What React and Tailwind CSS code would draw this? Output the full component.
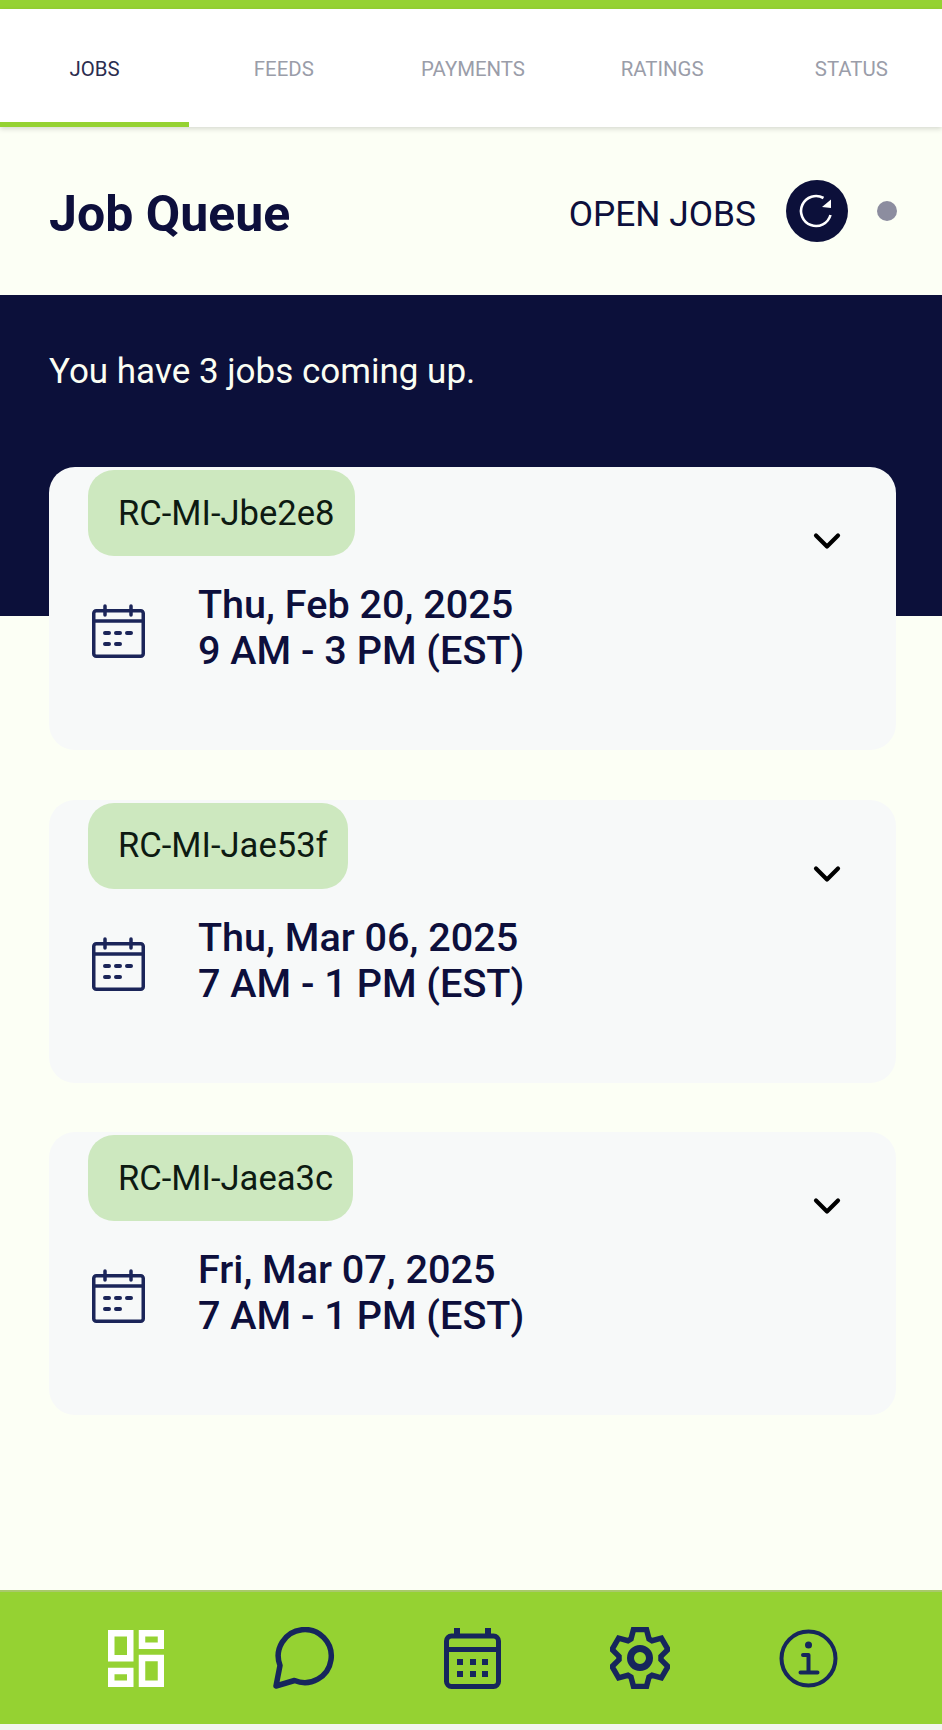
import { ChevronDown } from 'lucide-react';

const tabs = ['JOBS', 'FEEDS', 'PAYMENTS', 'RATINGS', 'STATUS'];

const jobs = [
  { id: 'RC-MI-Jbe2e8', date: 'Thu, Feb 20, 2025', time: '9 AM - 3 PM (EST)' },
  { id: 'RC-MI-Jae53f', date: 'Thu, Mar 06, 2025', time: '7 AM - 1 PM (EST)' },
  { id: 'RC-MI-Jaea3c', date: 'Fri, Mar 07, 2025', time: '7 AM - 1 PM (EST)' },
];

// six teeth around the centre of the gear icon
const gearPoints = [0, 60, 120, 180, 240, 300]
  .flatMap((deg) => {
    const a = (deg * Math.PI) / 180;
    return [[-9, -19], [-6.500, -28.500], [6.500, -28.500], [9, -19]].map(([x, y]) => [
      (30 + x * Math.cos(a) - y * Math.sin(a)).toFixed(1),
      (31 + x * Math.sin(a) + y * Math.cos(a)).toFixed(1),
    ]);
  })
  .map((p) => p.join(','))
  .join(' ');

function RefreshIcon() {
  return (
    <svg width="62" height="62" viewBox="0 0 62 62" fill="none">
      <path d="M37.500 18A15 15 0 1 0 44.500 35" stroke="#ffffff" strokeWidth="2.600" />
      <path d="M36 27L45 28V19.500Z" fill="#ffffff" />
    </svg>
  );
}

function CalendarSmall() {
  return (
    <svg width="53" height="54" viewBox="0 0 53 54" fill="none" stroke="#1b2559" strokeWidth="3.500" strokeLinejoin="round">
      <rect x="1.750" y="6.750" width="49.500" height="45.500" rx="2.500" />
      <path d="M1.750 17h49.500" />
      <path d="M13 2v9M39 2v9" strokeWidth="3.500" strokeLinecap="round" />
      <path d="M13 29h4M24 29h4M35 29h4M13 40h4M24 40h4" strokeWidth="4" strokeLinecap="round" />
    </svg>
  );
}

function DashboardIcon() {
  return (
    <svg width="56" height="57" viewBox="0 0 56 57" fill="none" stroke="#ffffff" strokeWidth="6.500">
      <rect x="3.250" y="3.250" width="19" height="25" />
      <rect x="34" y="3.250" width="19" height="12.500" />
      <rect x="3.250" y="41" width="19" height="12.750" />
      <rect x="34" y="28" width="19" height="25.750" />
    </svg>
  );
}

function ChatIcon() {
  return (
    <svg width="62" height="62" viewBox="0 0 62 62" fill="none" stroke="#16265c" strokeWidth="5.500" strokeLinejoin="round">
      <path d="M7 38.500L3 59L21.500 53.500A26.500 26.500 0 1 0 7 38.500Z" />
    </svg>
  );
}

function CalendarIcon() {
  return (
    <svg width="57" height="61" viewBox="0 0 57 61" fill="none">
      <rect x="2.500" y="8" width="52" height="50.500" rx="5" stroke="#16265c" strokeWidth="5" />
      <path d="M2.500 21.500h52" stroke="#16265c" strokeWidth="5" />
      <path d="M13 0v8M44 0v8" stroke="#16265c" strokeWidth="6" />
      <g fill="#16265c">
        <rect x="13" y="31" width="6" height="6" />
        <rect x="26" y="31" width="6" height="6" />
        <rect x="38" y="31" width="6" height="6" />
        <rect x="13" y="43" width="6" height="6" />
        <rect x="26" y="43" width="6" height="6" />
        <rect x="38" y="43" width="6" height="6" />
      </g>
    </svg>
  );
}

function GearIcon() {
  return (
    <svg width="60" height="62" viewBox="0 0 60 62" fill="none" stroke="#16265c" strokeWidth="5.500" strokeLinejoin="miter">
      <polygon points={gearPoints} />
      <circle cx="30" cy="31" r="9.500" strokeWidth="7" />
    </svg>
  );
}

function InfoIcon() {
  return (
    <svg width="59" height="59" viewBox="0 0 59 59" fill="none">
      <circle cx="29.500" cy="29.500" r="27" stroke="#16265c" strokeWidth="4" />
      <circle cx="29.500" cy="16" r="3.500" fill="#16265c" />
      <path d="M24 26h5.500v17.500M21.500 43.500h17" stroke="#16265c" strokeWidth="4" strokeLinecap="round" strokeLinejoin="round" />
    </svg>
  );
}

function JobCard({ job }) {
  return (
    <div className="relative h-[283px] rounded-[26px] bg-[#f7f9f9] pl-[39px] pt-[3px]">
      <div className="inline-flex h-[86px] items-center rounded-[26px] bg-[#cde8bf] pl-[30px] pr-[20px] pt-[1px] text-[34.600px] text-[#0d1a12]">
        {job.id}
      </div>
      <ChevronDown className="absolute right-[47px] top-[52px] h-[44px] w-[44px] text-black" strokeWidth={2.300} />
      <div className="mt-[26px] flex items-center">
        <div className="ml-[4px] mr-[53px] mt-[6px] shrink-0">
          <CalendarSmall />
        </div>
        <div className="text-[39.600px] font-medium leading-[46px] text-[#0d0f3c]">
          <div>{job.date}</div>
          <div>{job.time}</div>
        </div>
      </div>
    </div>
  );
}

export default function App() {
  return (
    <div className="flex h-[1730px] flex-col overflow-hidden bg-[#fcfff5] font-['Roboto',sans-serif]">
      <div className="h-[9px] bg-[#95d232]" />

      {/* Tabs */}
      <div className="relative grid h-[118px] grid-cols-[repeat(5,189.200px)] bg-white shadow-[0_2px_5px_rgba(0,0,0,0.15)]">
        {tabs.map((tab, i) => (
          <div
            key={tab}
            className={
              i === 0
                ? 'flex items-center justify-center border-b-[5px] border-[#95d232] pt-[7px] text-[20.400px] text-[#2b2d4f]'
                : 'flex items-center justify-center pt-[2px] text-[20.400px] text-[#9a9da9]'
            }
          >
            {tab}
          </div>
        ))}
      </div>

      {/* Header */}
      <div className="flex h-[168px] items-center pl-[49px] pr-[45px]">
        <h1 className="pt-[7px] text-[50px] font-bold text-[#0d0f3c]">Job Queue</h1>
        <span className="ml-auto pt-[6px] text-[35.300px] text-[#0d0f3c]">OPEN JOBS</span>
        <div className="ml-[30px] flex h-[62px] w-[62px] items-center justify-center rounded-full bg-[#0c103a]">
          <RefreshIcon />
        </div>
        <div className="ml-[29px] h-[20px] w-[20px] rounded-full bg-[#8c8d9f]" />
      </div>

      {/* Banner */}
      <div className="h-[321px] bg-[#0c103a] pl-[49px] pt-[57px] text-[35px] leading-[40px] text-[#fbfef3]">
        You have 3 jobs coming up.
      </div>

      {/* Jobs list */}
      <div className="ml-[49px] mr-[46px] mt-[-149px] flex flex-1 flex-col gap-[49.600px]">
        {jobs.map((job) => (
          <JobCard key={job.id} job={job} />
        ))}
      </div>

      {/* Bottom nav */}
      <div className="grid h-[134px] grid-cols-5 items-center border-t-2 border-[#a9c96b] bg-[#95d232] pl-[52px] pr-[50px]">
        <div className="flex justify-center"><DashboardIcon /></div>
        <div className="flex justify-center"><ChatIcon /></div>
        <div className="flex justify-center"><CalendarIcon /></div>
        <div className="flex justify-center"><GearIcon /></div>
        <div className="flex justify-center"><InfoIcon /></div>
      </div>
      <div className="h-[6px] bg-[#f3f5f0]" />
    </div>
  );
}
